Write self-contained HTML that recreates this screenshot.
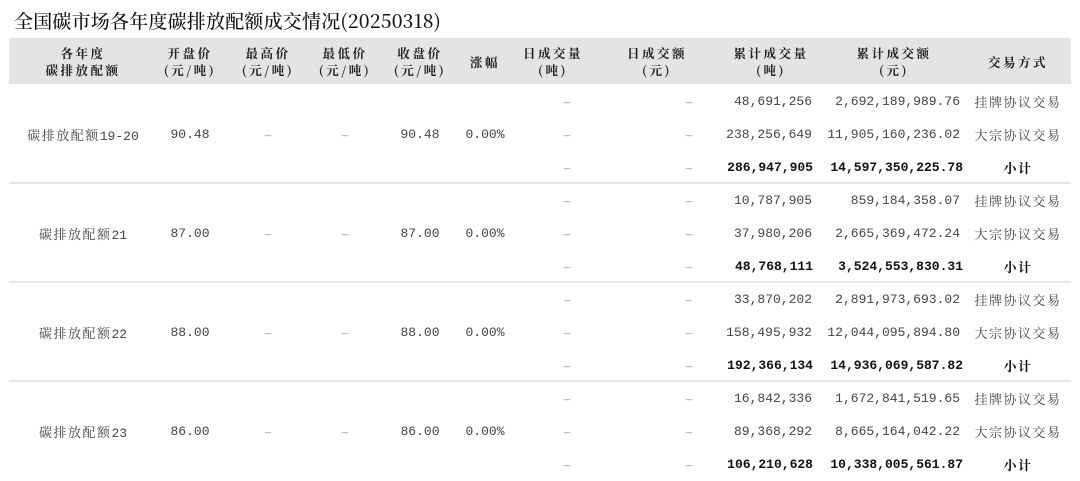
<!DOCTYPE html>
<html><head><meta charset="utf-8"><style>
body{margin:0;width:1080px;height:481px;background:#fff;position:relative;overflow:hidden;font-family:"Liberation Serif","Noto Serif CJK SC",serif;}
.t{position:absolute;line-height:18px;font-size:13px;color:#444;white-space:nowrap;margin-top:1px}
.c{text-align:center}.r{text-align:right}
.h{font-family:"Noto Serif CJK SC",serif;font-weight:bold;font-size:12.5px;color:#222;line-height:17px;letter-spacing:2.5px}
.m{font-family:"Liberation Mono","Noto Serif CJK SC",monospace;}
.b{font-weight:bold;color:#111}
.d{color:#888}
.cj{font-family:"Noto Serif CJK SC",serif;letter-spacing:1.5px}
.line{position:absolute;left:9px;width:1062px;height:2px;background:#e6e6e6}
</style></head><body>
<div class="t" style="left:14px;top:8px;font-size:19px;line-height:24px;color:#111;font-family:'Noto Serif CJK SC',serif;letter-spacing:0.2px;font-weight:500">全国碳市场各年度碳排放配额成交情况(20250318)</div>
<div style="position:absolute;left:9px;top:38px;width:1062px;height:46px;background:#e4e4e4"></div>
<div class="t h c" style="left:13px;width:140px;top:44px">各年度<br>碳排放配额</div>
<div class="t h c" style="left:150px;width:80px;top:44px">开盘价<br>(元/吨)</div>
<div class="t h c" style="left:228px;width:80px;top:44px">最高价<br>(元/吨)</div>
<div class="t h c" style="left:305px;width:80px;top:44px">最低价<br>(元/吨)</div>
<div class="t h c" style="left:380px;width:80px;top:44px">收盘价<br>(元/吨)</div>
<div class="t h c" style="left:455px;width:60px;top:53px">涨幅</div>
<div class="t h c" style="left:513px;width:80px;top:44px">日成交量<br>(吨)</div>
<div class="t h c" style="left:617px;width:80px;top:44px">日成交额<br>(元)</div>
<div class="t h c" style="left:731px;width:80px;top:44px">累计成交量<br>(吨)</div>
<div class="t h c" style="left:854px;width:80px;top:44px">累计成交额<br>(元)</div>
<div class="t h c" style="left:968px;width:100px;top:53px">交易方式</div>

<div class="line" style="top:182px"></div>
<div class="line" style="top:281px"></div>
<div class="line" style="top:380px"></div>

<div class="t c cj" style="left:13px;width:140px;top:125px">碳排放配额<span class="m" style="letter-spacing:0">19-20</span></div>
<div class="t c m" style="left:160px;width:60px;top:125px">90.48</div>
<div class="t c d" style="left:238px;width:60px;top:125px">–</div>
<div class="t c d" style="left:315px;width:60px;top:125px">–</div>
<div class="t c m" style="left:390px;width:60px;top:125px">90.48</div>
<div class="t c m" style="left:455px;width:60px;top:125px">0.00%</div>
<div class="t c d" style="left:537px;width:60px;top:92px">–</div><div class="t c d" style="left:537px;width:60px;top:125px">–</div><div class="t c d" style="left:537px;width:60px;top:158px">–</div>
<div class="t c d" style="left:659px;width:60px;top:92px">–</div><div class="t c d" style="left:659px;width:60px;top:125px">–</div><div class="t c d" style="left:659px;width:60px;top:158px">–</div>
<div class="t r m" style="left:700px;width:112px;top:92px">48,691,256</div>
<div class="t r m" style="left:700px;width:112px;top:125px">238,256,649</div>
<div class="t r m b" style="left:700px;width:113px;top:158px">286,947,905</div>
<div class="t r m" style="left:820px;width:140px;top:92px">2,692,189,989.76</div>
<div class="t r m" style="left:820px;width:140px;top:125px">11,905,160,236.02</div>
<div class="t r m b" style="left:820px;width:143px;top:158px">14,597,350,225.78</div>
<div class="t c cj" style="left:968px;width:100px;top:92px">挂牌协议交易</div>
<div class="t c cj" style="left:968px;width:100px;top:125px">大宗协议交易</div>
<div class="t c cj b" style="left:968px;width:100px;top:158px">小计</div>

<div class="t c cj" style="left:13px;width:140px;top:224px">碳排放配额<span class="m" style="letter-spacing:0">21</span></div>
<div class="t c m" style="left:160px;width:60px;top:224px">87.00</div>
<div class="t c d" style="left:238px;width:60px;top:224px">–</div>
<div class="t c d" style="left:315px;width:60px;top:224px">–</div>
<div class="t c m" style="left:390px;width:60px;top:224px">87.00</div>
<div class="t c m" style="left:455px;width:60px;top:224px">0.00%</div>
<div class="t c d" style="left:537px;width:60px;top:191px">–</div><div class="t c d" style="left:537px;width:60px;top:224px">–</div><div class="t c d" style="left:537px;width:60px;top:257px">–</div>
<div class="t c d" style="left:659px;width:60px;top:191px">–</div><div class="t c d" style="left:659px;width:60px;top:224px">–</div><div class="t c d" style="left:659px;width:60px;top:257px">–</div>
<div class="t r m" style="left:700px;width:112px;top:191px">10,787,905</div>
<div class="t r m" style="left:700px;width:112px;top:224px">37,980,206</div>
<div class="t r m b" style="left:700px;width:113px;top:257px">48,768,111</div>
<div class="t r m" style="left:820px;width:140px;top:191px">859,184,358.07</div>
<div class="t r m" style="left:820px;width:140px;top:224px">2,665,369,472.24</div>
<div class="t r m b" style="left:820px;width:143px;top:257px">3,524,553,830.31</div>
<div class="t c cj" style="left:968px;width:100px;top:191px">挂牌协议交易</div>
<div class="t c cj" style="left:968px;width:100px;top:224px">大宗协议交易</div>
<div class="t c cj b" style="left:968px;width:100px;top:257px">小计</div>

<div class="t c cj" style="left:13px;width:140px;top:323px">碳排放配额<span class="m" style="letter-spacing:0">22</span></div>
<div class="t c m" style="left:160px;width:60px;top:323px">88.00</div>
<div class="t c d" style="left:238px;width:60px;top:323px">–</div>
<div class="t c d" style="left:315px;width:60px;top:323px">–</div>
<div class="t c m" style="left:390px;width:60px;top:323px">88.00</div>
<div class="t c m" style="left:455px;width:60px;top:323px">0.00%</div>
<div class="t c d" style="left:537px;width:60px;top:290px">–</div><div class="t c d" style="left:537px;width:60px;top:323px">–</div><div class="t c d" style="left:537px;width:60px;top:356px">–</div>
<div class="t c d" style="left:659px;width:60px;top:290px">–</div><div class="t c d" style="left:659px;width:60px;top:323px">–</div><div class="t c d" style="left:659px;width:60px;top:356px">–</div>
<div class="t r m" style="left:700px;width:112px;top:290px">33,870,202</div>
<div class="t r m" style="left:700px;width:112px;top:323px">158,495,932</div>
<div class="t r m b" style="left:700px;width:113px;top:356px">192,366,134</div>
<div class="t r m" style="left:820px;width:140px;top:290px">2,891,973,693.02</div>
<div class="t r m" style="left:820px;width:140px;top:323px">12,044,095,894.80</div>
<div class="t r m b" style="left:820px;width:143px;top:356px">14,936,069,587.82</div>
<div class="t c cj" style="left:968px;width:100px;top:290px">挂牌协议交易</div>
<div class="t c cj" style="left:968px;width:100px;top:323px">大宗协议交易</div>
<div class="t c cj b" style="left:968px;width:100px;top:356px">小计</div>

<div class="t c cj" style="left:13px;width:140px;top:422px">碳排放配额<span class="m" style="letter-spacing:0">23</span></div>
<div class="t c m" style="left:160px;width:60px;top:422px">86.00</div>
<div class="t c d" style="left:238px;width:60px;top:422px">–</div>
<div class="t c d" style="left:315px;width:60px;top:422px">–</div>
<div class="t c m" style="left:390px;width:60px;top:422px">86.00</div>
<div class="t c m" style="left:455px;width:60px;top:422px">0.00%</div>
<div class="t c d" style="left:537px;width:60px;top:389px">–</div><div class="t c d" style="left:537px;width:60px;top:422px">–</div><div class="t c d" style="left:537px;width:60px;top:455px">–</div>
<div class="t c d" style="left:659px;width:60px;top:389px">–</div><div class="t c d" style="left:659px;width:60px;top:422px">–</div><div class="t c d" style="left:659px;width:60px;top:455px">–</div>
<div class="t r m" style="left:700px;width:112px;top:389px">16,842,336</div>
<div class="t r m" style="left:700px;width:112px;top:422px">89,368,292</div>
<div class="t r m b" style="left:700px;width:113px;top:455px">106,210,628</div>
<div class="t r m" style="left:820px;width:140px;top:389px">1,672,841,519.65</div>
<div class="t r m" style="left:820px;width:140px;top:422px">8,665,164,042.22</div>
<div class="t r m b" style="left:820px;width:143px;top:455px">10,338,005,561.87</div>
<div class="t c cj" style="left:968px;width:100px;top:389px">挂牌协议交易</div>
<div class="t c cj" style="left:968px;width:100px;top:422px">大宗协议交易</div>
<div class="t c cj b" style="left:968px;width:100px;top:455px">小计</div>
</body></html>
